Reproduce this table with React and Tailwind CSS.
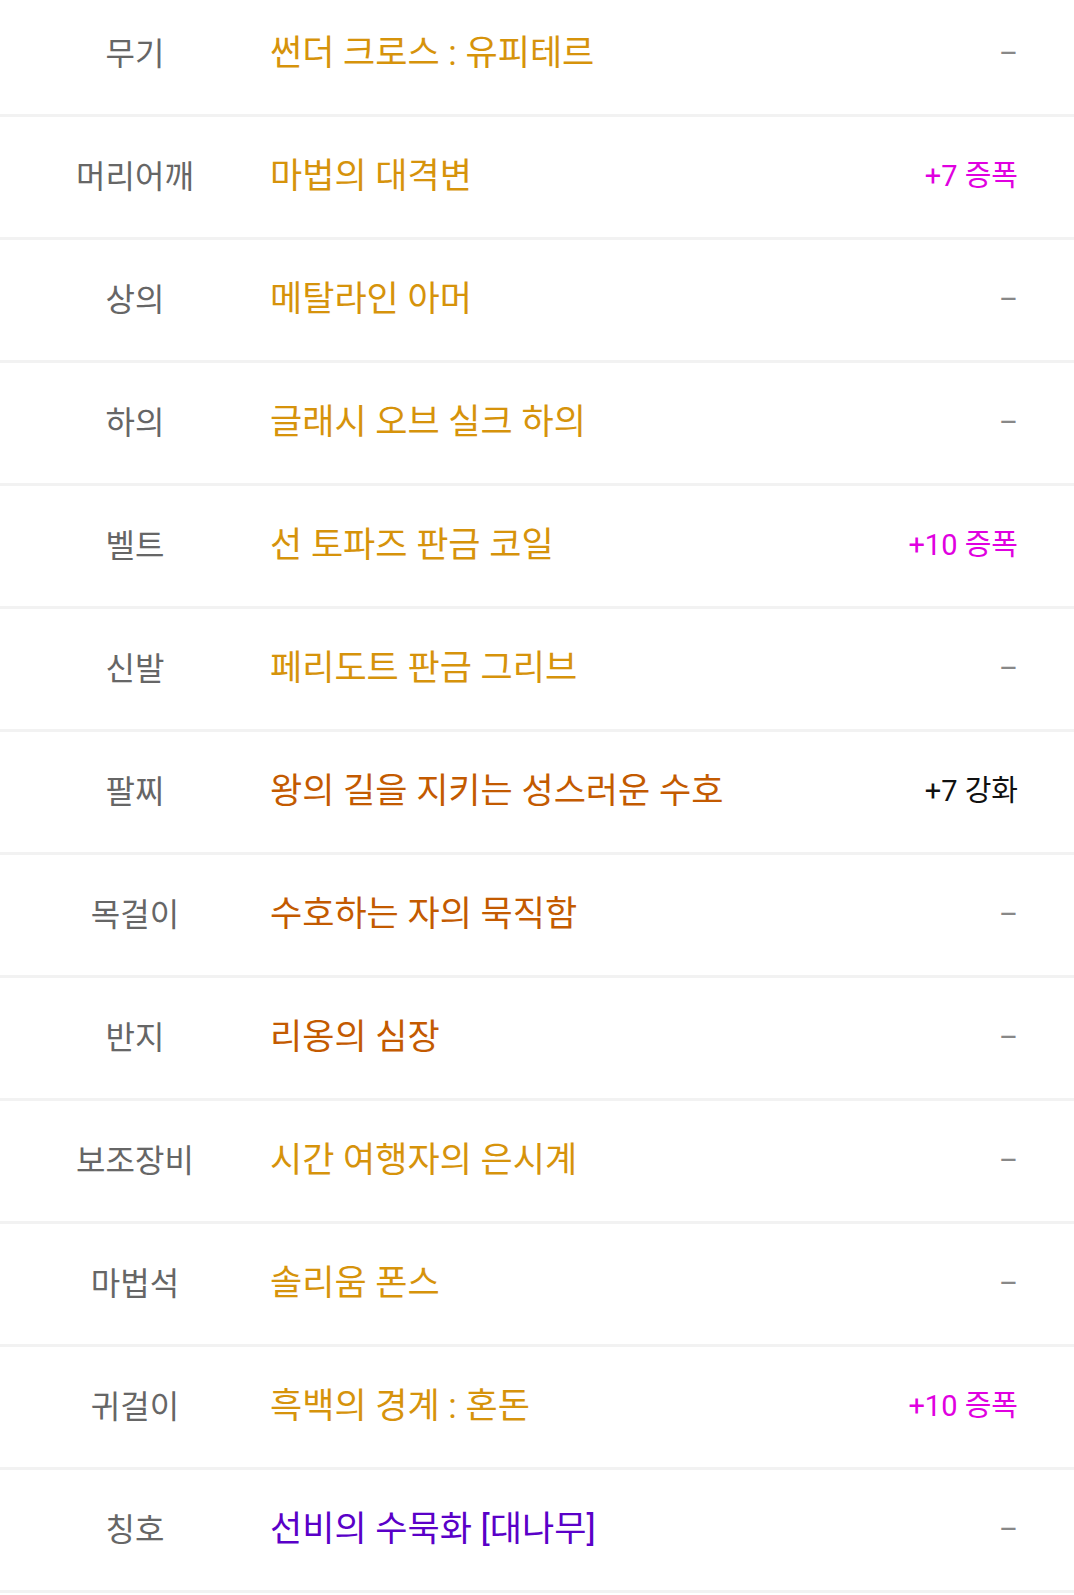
import React from 'react';

const rows = [
  { label: "무기", name: "썬더 크로스 : 유피테르", color: "text-[#d6930b]", extra: null },
  { label: "머리어깨", name: "마법의 대격변", color: "text-[#d6930b]", extra: "+7 증폭", extraColor: "text-[#e000e0]" },
  { label: "상의", name: "메탈라인 아머", color: "text-[#d6930b]", extra: null },
  { label: "하의", name: "글래시 오브 실크 하의", color: "text-[#d6930b]", extra: null },
  { label: "벨트", name: "선 토파즈 판금 코일", color: "text-[#d6930b]", extra: "+10 증폭", extraColor: "text-[#e000e0]" },
  { label: "신발", name: "페리도트 판금 그리브", color: "text-[#d6930b]", extra: null },
  { label: "팔찌", name: "왕의 길을 지키는 성스러운 수호", color: "text-[#c35a00]", extra: "+7 강화", extraColor: "text-[#111111]" },
  { label: "목걸이", name: "수호하는 자의 묵직함", color: "text-[#c35a00]", extra: null },
  { label: "반지", name: "리옹의 심장", color: "text-[#c35a00]", extra: null },
  { label: "보조장비", name: "시간 여행자의 은시계", color: "text-[#d6930b]", extra: null },
  { label: "마법석", name: "솔리움 폰스", color: "text-[#d6930b]", extra: null },
  { label: "귀걸이", name: "흑백의 경계 : 혼돈", color: "text-[#d6930b]", extra: "+10 증폭", extraColor: "text-[#e000e0]" },
  { label: "칭호", name: "선비의 수묵화 [대나무]", color: "text-[#5a00c8]", extra: null },
];

export default function App() {
  return (
    <div className="bg-white w-[1074px] h-[1595px] overflow-hidden font-['Roboto','Noto_Sans_CJK_KR',sans-serif]">
      <div className="-mt-[6px]">
        {rows.map((r, i) => (
          <div key={i} className="flex items-center h-[123px] border-b-[3px] border-[#f2f2f2]">
            <div className="w-[270px] text-center text-[32px] text-[#666666]">{r.label}</div>
            <div className={`flex-1 text-[35px] ${r.color}`}>{r.name}</div>
            <div className="pr-[56px] text-[29px]">
              {r.extra ? (
                <span className={r.extraColor}>{r.extra}</span>
              ) : (
                <span className="text-[#888888]">–</span>
              )}
            </div>
          </div>
        ))}
      </div>
    </div>
  );
}
